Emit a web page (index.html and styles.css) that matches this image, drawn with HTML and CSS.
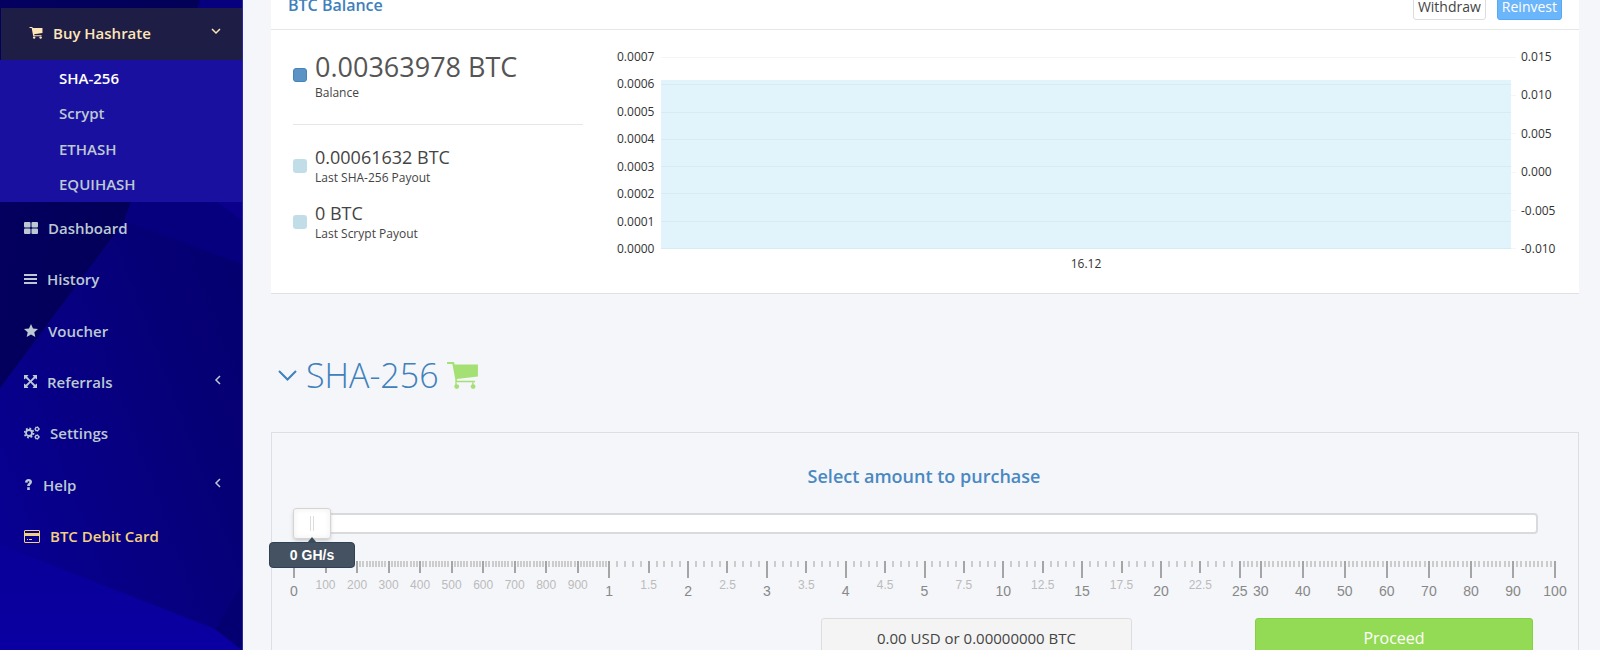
FILE: index.html
```
<!DOCTYPE html>
<html lang="en">

<head>
    <meta charset="utf-8">
    <title>Buy Hashrate</title>
    <link rel="stylesheet" href="styles.css">
</head>

<body>
    <div id="app">
        <aside id="sidebar">
            <svg class="backdrop" viewBox="0 0 242 650" preserveAspectRatio="none" aria-hidden="true">
                <defs>
                    <linearGradient id="main-shade" x1="1" y1="0" x2="0" y2="1">
                        <stop offset="0" stop-color="#030068" />
                        <stop offset="0.400" stop-color="#060076" />
                        <stop offset="1" stop-color="#080096" />
                    </linearGradient>
                    <linearGradient id="dark-shade" x1="0" y1="0" x2="1" y2="0.300">
                        <stop offset="0" stop-color="#030060" />
                        <stop offset="1" stop-color="#020056" />
                    </linearGradient>
                    <linearGradient id="low-shade" x1="0" y1="0" x2="0" y2="1">
                        <stop offset="0" stop-color="#090098" />
                        <stop offset="1" stop-color="#0a00a2" />
                    </linearGradient>
                </defs>
                <rect width="242" height="650" fill="url(#main-shade)" />
                <polygon points="0,0 200,0 128,216 0,388" fill="url(#dark-shade)" />
                <polygon points="200,0 242,0 242,264 124,221" fill="#07007e" />
                <polygon points="215,200 242,200 242,220" fill="#0a008c" />
                <polygon points="0,545 215,629 242,650 0,650" fill="url(#low-shade)" />
                <polygon points="242,585 242,650 215,629" fill="#050072" />
            </svg>
            <nav>
                <a class="parent" href="#buy">
                    <svg class="icon" width="14" height="12" viewBox="0 0 14 13"><path d="M0 0h3l.5 1H14v5.500L5 7.800l.2 1.200H13v1H4L2.300 1H0z" /><circle cx="5" cy="11.500" r="1.300" /><circle cx="12" cy="11.500" r="1.300" /></svg>
                    <span>Buy Hashrate</span>
                    <svg class="arrow" width="10" height="10" viewBox="0 0 10 10"><path d="M1 3l4 4 4-4" /></svg>
                </a>
                <div class="submenu">
                    <a class="current" href="#sha">SHA-256</a>
                    <a href="#scrypt">Scrypt</a>
                    <a href="#ethash">ETHASH</a>
                    <a href="#equihash">EQUIHASH</a>
                </div>
                <div class="menu">
                    <a href="#dashboard">
                        <svg class="icon" width="14" height="12" viewBox="0 0 14 12"><rect width="6.500" height="5.500" rx="1" /><rect x="7.500" width="6.500" height="5.500" rx="1" /><rect y="6.500" width="6.500" height="5.500" rx="1" /><rect x="7.500" y="6.500" width="6.500" height="5.500" rx="1" /></svg>
                        <span>Dashboard</span>
                    </a>
                    <a href="#history">
                        <svg class="icon" width="13" height="12" viewBox="0 0 13 12"><path d="M0 1h13v2H0zM0 5h13v2H0zM0 9h13v2H0z" /></svg>
                        <span>History</span>
                    </a>
                    <a href="#voucher">
                        <svg class="icon" width="14" height="13" viewBox="0 0 14 13"><path d="M7 0l2 4.400 5 .6-3.700 3.300 1 4.700L7 10.600 2.700 13l1-4.700L0 5l5-.6z" /></svg>
                        <span>Voucher</span>
                    </a>
                    <a href="#referrals">
                        <svg class="icon" width="13" height="13" viewBox="0 0 13 13"><path d="M0 0h4.500L3.200 1.800l3.300 3.500 3.300-3.500L8.500 0H13v4.500l-1.800-1.300-3.500 3.300 3.500 3.300L13 8.500V13H8.500l1.300-1.800-3.300-3.500-3.300 3.500L4.500 13H0V8.500l1.800 1.300 3.500-3.300-3.500-3.300L0 4.500z" /></svg>
                        <span>Referrals</span>
                        <svg class="arrow" width="10" height="10" viewBox="0 0 10 10"><path d="M7 1L3 5l4 4" /></svg>
                    </a>
                    <a href="#settings">
                        <svg class="icon gears" width="16" height="14" viewBox="0 0 16 14"><circle class="teeth" cx="5" cy="7" r="4.500" /><circle cx="5" cy="7" r="3" /><circle class="teeth small" cx="13" cy="3" r="2.300" /><circle class="small-ring" cx="13" cy="3" r="1.600" /><circle class="teeth small" cx="13" cy="11" r="2.300" /><circle class="small-ring" cx="13" cy="11" r="1.600" /></svg>
                        <span>Settings</span>
                    </a>
                    <a href="#help">
                        <svg class="icon" width="9" height="11" viewBox="0 0 9 11"><path d="M1 3.500C1 1.200 2.500 0 4.500 0S8 1.100 8 3c0 2.300-2.200 2.300-2.200 4H3.200c0-2.600 2.200-2.600 2.200-3.900 0-1.300-1.700-1.200-1.900.6zM3.200 8.300h2.600V11H3.200z" /></svg>
                        <span>Help</span>
                        <svg class="arrow" width="10" height="10" viewBox="0 0 10 10"><path d="M7 1L3 5l4 4" /></svg>
                    </a>
                    <a class="card-link" href="#card">
                        <svg class="icon" width="16" height="13" viewBox="0 0 16 13"><path fill-rule="evenodd" d="M1 0h14l1 1v11l-1 1H1l-1-1V1zM1 1v2h14V1zM1 6v6h14V6zM3 9h1v1H3zM5 9h3v1H5z" /></svg>
                        <span>BTC Debit Card</span>
                    </a>
                </div>
            </nav>
        </aside>

        <main>
            <section class="panel">
                <header>
                    <h3>BTC Balance</h3>
                    <div class="actions">
                        <button>Withdraw</button>
                        <button class="blue">Reinvest</button>
                    </div>
                </header>
                <div class="panel-body">
                    <div class="stats">
                        <div class="stat total">
                            <strong>0.00363978 BTC</strong>
                            <span>Balance</span>
                        </div>
                        <div class="stat">
                            <strong>0.00061632 BTC</strong>
                            <span>Last SHA-256 Payout</span>
                        </div>
                        <div class="stat">
                            <strong>0 BTC</strong>
                            <span>Last Scrypt Payout</span>
                        </div>
                    </div>
                    <div class="chart">
                        <div class="axis">
                            <span>0.0007</span><span>0.0006</span><span>0.0005</span><span>0.0004</span><span>0.0003</span><span>0.0002</span><span>0.0001</span><span>0.0000</span>
                        </div>
                        <div class="plot">
                            <div class="area"></div>
                            <div class="lines"><i></i><i></i><i></i><i></i><i></i><i></i><i></i><i></i></div>
                        </div>
                        <div class="lines ticks"><i></i><i></i><i></i><i></i><i></i><i></i></div>
                        <div class="axis">
                            <span>0.015</span><span>0.010</span><span>0.005</span><span>0.000</span><span>-0.005</span><span>-0.010</span>
                        </div>
                        <div class="date">16.12</div>
                    </div>
                </div>
            </section>

            <h1>
                <svg class="toggle" width="19" height="12" viewBox="0 0 19 12"><path d="M1 1l8.500 8.500L18 1" /></svg>
                <span>SHA-256</span>
                <svg class="cart" width="31" height="27" viewBox="0 0 32 28"><path d="M0 0h7l1 2.500h24V15L10 17.500l.5 2H29V21H8.500v-3L5.500 2H0z" /><circle cx="10" cy="25.500" r="2.500" /><circle cx="27" cy="25.500" r="2.500" /><path d="M8.500 21h1.500v3H8.500zM26 21h1.500v3H26z" /></svg>
            </h1>

            <section class="purchase">
                <h2><label for="amount">Select amount to purchase</label></h2>
                <div class="slider">
                    <input type="range" id="amount" min="0" max="100" value="0">
                    <output class="tooltip" for="amount">0 GH/s</output>
                </div>
                <div class="pips" id="pips"></div>
                <div class="checkout">
                    <input type="text" value="0.00 USD or 0.00000000 BTC" aria-label="Price" readonly>
                    <button>Proceed</button>
                </div>
            </section>
        </main>
    </div>
    <script>
        var pips = document.getElementById("pips");

        function addPip(pos, size, label) {
            var pip = document.createElement("div");
            pip.className = "pip " + size;
            pip.style.left = pos + "%";
            if (label !== undefined) {
                var text = document.createElement("span");
                text.textContent = label;
                pip.appendChild(text);
            }
            pips.appendChild(pip);
        }

        // first quarter: 0 - 1 TH/s in steps of 10 GH/s
        for (var i = 0; i < 100; i++) {
            if (i == 0) addPip(0, "large", "0");
            else if (i % 10 == 0) addPip(i / 4, "medium", i * 10);
            else addPip(i / 4, "small");
        }

        // middle half: eight equal parts
        var stops = [1, 2, 3, 4, 5, 10, 15, 20, 25];
        for (var s = 0; s < 8; s++) {
            for (var j = 0; j < 10; j++) {
                var pos = 25 + (s + j / 10) * 6.25;
                if (j == 0) addPip(pos, "large", stops[s]);
                else if (j == 5) addPip(pos, "medium", (stops[s] + stops[s + 1]) / 2);
                else addPip(pos, "small");
            }
        }

        // last quarter: 25 - 100 TH/s
        for (var v = 25; v <= 100; v++) {
            var p = 75 + (v - 25) / 3;
            if (v == 25 || v % 10 == 0) addPip(p, "large", v);
            else addPip(p, "small");
        }
    </script>
</body>

</html>
```
FILE: styles.css
```
*,
*::before {
    box-sizing: border-box;
}

body {
    margin: 0;
    font-family: "Open Sans", "Noto Sans", sans-serif;
    font-size: 14px;
    color: #444;
    background: #f4f6fa;
}

h1,
h2,
h3 {
    margin: 0;
}

button,
input {
    font-family: inherit;
}

#app {
    display: flex;
    height: 100vh;
    overflow: hidden;
}

/* sidebar */
#sidebar {
    position: relative;
    flex: none;
    width: 243px;
    padding-top: 8px;
    background: #06007a;
    border-right: 1px solid #2c2a9c;
}

.backdrop {
    position: absolute;
    top: 0;
    left: 0;
    width: 100%;
    height: 100%;
}

nav {
    position: relative;
}

nav a {
    display: flex;
    align-items: center;
    font-size: 15px;
    font-weight: 600;
    line-height: 20px;
    color: #bcc9d2;
    text-decoration: none;
}

.icon {
    flex: none;
    margin-right: 10px;
    fill: currentColor;
}

.arrow {
    margin-left: auto;
    margin-bottom: 4px;
    fill: none;
    stroke: currentColor;
    stroke-width: 1.5;
}

.parent {
    height: 52px;
    margin-left: 1px;
    padding: 0 21px 2px 28px;
    color: #ffe6b8;
    background: #1e1d45;
}

.submenu {
    display: flex;
    flex-direction: column;
    height: 142px;
    background: #1a10a0;
}

.submenu a {
    flex: 1;
    padding-left: 59px;
}

.submenu .current {
    color: #fff;
}

.menu {
    display: grid;
    grid-auto-rows: 1fr;
    height: 360px;
}

.menu a {
    padding: 0 19px 0 24px;
}

.menu .card-link {
    color: #f3d07f;
}

.gears {
    fill: none;
    stroke: currentColor;
    stroke-width: 1.8;
}

.gears .teeth {
    stroke-dasharray: 1.8 1.7;
}

.gears .small {
    stroke-width: 1;
    stroke-dasharray: 1 1;
}

.gears .small-ring {
    stroke-width: 1.2;
}

/* main */
main {
    flex: 1;
    min-width: 0;
    padding: 0 21px 0 28px;
}

.panel {
    margin-top: -20px;
    background: #fff;
    border-bottom: 1px solid #dfe2e5;
}

.panel header {
    display: flex;
    align-items: center;
    justify-content: space-between;
    height: 50px;
    padding: 0 17px;
    border-bottom: 1px solid #e4e6e8;
}

.panel h3 {
    font-size: 16px;
    font-weight: 600;
    line-height: 22px;
    color: #4080bb;
}

.actions {
    display: flex;
    gap: 11px;
    padding-top: 5px;
}

.actions button {
    height: 25px;
    padding: 0 4px;
    font-size: 14px;
    line-height: 20px;
    color: #444;
    background: #fff;
    border: 1px solid #ddd;
    border-radius: 3px;
}

.actions .blue {
    color: #fff;
    background: #6bb5fb;
    border-color: #57a8f5;
}

.panel-body {
    display: flex;
    gap: 34px;
    padding: 17px 21px 10px 22px;
}

.stats {
    width: 290px;
}

.stat {
    position: relative;
    padding: 1px 0 7px 22px;
}

.stat::before {
    content: "";
    position: absolute;
    left: 0;
    top: 18px;
    width: 14px;
    height: 14px;
    border-radius: 3px;
    background: #c1dde7;
}

.stat strong,
.stat span {
    display: block;
    font-weight: 400;
}

.stat strong {
    font-size: 18px;
    line-height: 30px;
}

.stat span {
    margin-top: -6px;
    font-size: 12px;
    line-height: 24px;
}

.stat.total {
    margin-bottom: 16px;
    padding: 0 0 19px 22px;
    border-bottom: 1px solid #e6e6e6;
}

.stat.total::before {
    top: 21px;
    background: #5b93c5;
    border: 1px solid #4384bd;
}

.stat.total strong {
    font-size: 27px;
    line-height: 40px;
    color: #555;
}

/* chart */
.chart {
    flex: 1;
    display: grid;
    grid-template-columns: 44px 1fr 5px 42px;
    grid-template-rows: 212px 24px;
}

.axis {
    display: flex;
    flex-direction: column;
    justify-content: space-between;
    font-size: 12px;
    line-height: 20px;
    color: #333;
}

.ticks + .axis {
    padding-left: 5px;
}

.plot {
    position: relative;
    margin: 10px 0;
}

.area {
    position: absolute;
    left: 0;
    right: 0;
    bottom: 0;
    height: 88%;
    background: #e1f4fc;
}

.lines {
    position: relative;
    display: flex;
    flex-direction: column;
    justify-content: space-between;
    height: 100%;
}

.lines i {
    height: 1px;
    background: rgba(0, 0, 0, 0.04);
}

.ticks {
    height: auto;
    margin: 10px 0;
}

.date {
    grid-column: 2;
    font-size: 12px;
    line-height: 10px;
    text-align: center;
    color: #333;
}

/* heading */
h1 {
    display: flex;
    align-items: center;
    padding: 56px 0 31px 7px;
    font-size: 34px;
    font-weight: 300;
    line-height: 51px;
    color: #4080bb;
}

.toggle {
    margin-right: 9px;
    fill: none;
    stroke: currentColor;
    stroke-width: 2;
}

.cart {
    margin-left: 8px;
    fill: #a5e074;
}

/* purchase box */
.purchase {
    padding: 30px 23px 20px 21px;
    border: 1px solid #dcdfe3;
}

.purchase h2 {
    font-size: 18px;
    font-weight: 600;
    line-height: 26px;
    text-align: center;
    color: #4a88c2;
}

.slider {
    position: relative;
    margin: 19px 17px 0 0;
}

.slider input {
    -webkit-appearance: none;
    appearance: none;
    display: block;
    width: 100%;
    height: 31px;
    margin: 0;
    background: none;
}

.slider input::-webkit-slider-runnable-track {
    height: 21px;
    background: #fff;
    border: 2px solid #d9dadc;
    border-left-width: 0;
    border-radius: 4px;
}

.slider input::-webkit-slider-thumb {
    -webkit-appearance: none;
    width: 38px;
    height: 31px;
    margin-top: -7px;
    background:
        linear-gradient(#ddd, #ddd) 16px 7px / 1px 15px no-repeat,
        linear-gradient(#ddd, #ddd) 19px 7px / 1px 15px no-repeat,
        #fff;
    border: 1px solid #d5d5d5;
    border-radius: 3px;
    box-shadow: inset 0 0 6px #eee, 0 2px 4px -1px #bbb;
}

.tooltip {
    position: absolute;
    z-index: 1;
    top: 34px;
    left: -24px;
    width: 86px;
    font-family: "Liberation Sans", Arial, sans-serif;
    font-size: 14px;
    font-weight: 700;
    line-height: 24px;
    text-align: center;
    color: #fff;
    background: #445262;
    border: 1px solid #2e4155;
    border-radius: 4px;
}

.tooltip::before {
    content: "";
    position: absolute;
    top: -6px;
    left: 37px;
    border: 5px solid transparent;
    border-top: 0;
    border-bottom: 6px solid #3a4b5c;
}

.pips {
    position: relative;
    height: 40px;
    margin: 22px 0 17px 1px;
    font-family: "Liberation Sans", Arial, sans-serif;
}

.pip {
    position: absolute;
    top: 0;
    width: 2px;
    height: 6px;
    margin-left: -1px;
    background: #ccc;
}

.pip.medium {
    height: 12px;
    background: #a5a5a5;
}

.pip.large {
    height: 17px;
    background: #a5a5a5;
}

.pip span {
    position: absolute;
    top: 17px;
    left: 1px;
    transform: translateX(-50%);
    font-size: 12px;
    line-height: 14px;
    color: #bbb;
}

.pip.large span {
    top: 22px;
    font-size: 14px;
    line-height: 16px;
    color: #888;
}

.checkout {
    display: grid;
    grid-template-columns: 528fr 311fr 123fr 278fr 22fr;
}

.checkout input {
    grid-column: 2;
    min-width: 0;
    height: 39px;
    font-size: 15px;
    text-align: center;
    color: #444;
    background: #f4f4f4;
    border: 1px solid #ddd;
    border-radius: 3px;
}

.checkout button {
    grid-column: 4;
    font-size: 16px;
    color: #fff;
    background: #93db54;
    border: 1px solid #86d045;
    border-radius: 3px;
}
```
